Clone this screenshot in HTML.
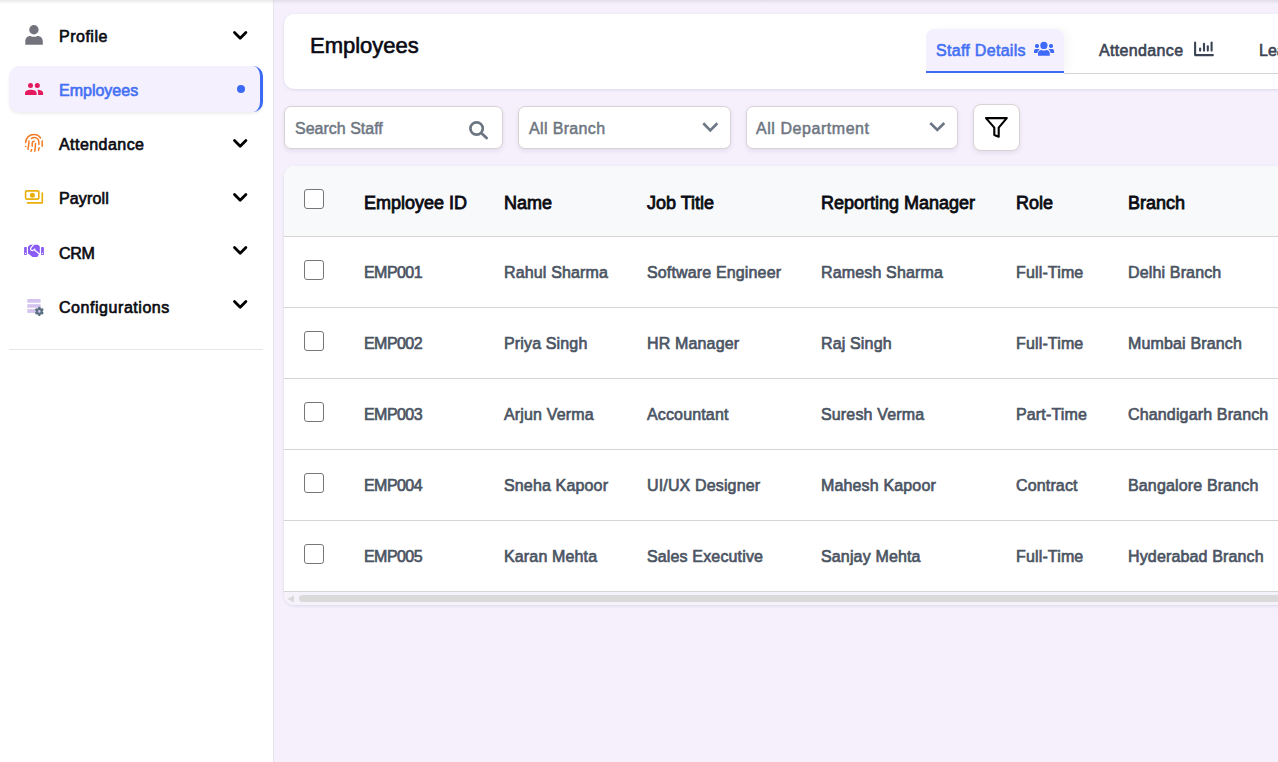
<!DOCTYPE html>
<html><head><meta charset="utf-8">
<style>
*{box-sizing:border-box;margin:0;padding:0}
html,body{width:1278px;height:762px;overflow:hidden;background:#f5f0fc;font-family:"Liberation Sans",sans-serif;}
.abs{position:absolute}
svg.abs{overflow:visible}
#topshade{position:absolute;left:0;top:0;width:1278px;height:4px;background:linear-gradient(rgba(190,190,195,.35),rgba(230,230,235,0));z-index:50}
#sidebar{position:absolute;left:0;top:0;width:274px;height:762px;background:#fff;border-right:1px solid #e4e4ea}
.lbl{position:absolute;left:59px;font-size:16px;line-height:20px;color:#0b0b12;white-space:nowrap;-webkit-text-stroke:0.65px #0b0b12}
#pill{position:absolute;left:9px;top:66px;width:254px;height:46px;background:#f5f0fd;border-radius:10px;border-right:3px solid #3d6af5;box-shadow:0 2px 3px rgba(0,0,0,.07)}
#dot{position:absolute;left:237px;top:85px;width:8px;height:8px;border-radius:50%;background:#3d6af5}
#divider{position:absolute;left:9px;top:349px;width:254px;height:1px;background:#e4e6ea}

#hcard{position:absolute;left:284px;top:14px;width:1010px;height:75px;background:#fff;border-radius:10px;box-shadow:0 1px 3px rgba(60,40,90,.12)}
#title{position:absolute;left:310px;top:32px;font-size:22px;line-height:28px;color:#0a0a14;white-space:nowrap;-webkit-text-stroke:0.6px #0a0a14}
#tab1{position:absolute;left:926px;top:29px;width:138px;height:44px;background:#f5f0fd;border-radius:8px 8px 0 0;border-bottom:2.5px solid #3d6af5;box-shadow:5px 0 8px rgba(0,0,0,.035)}
.tabt{position:absolute;font-size:16px;line-height:20px;white-space:nowrap}
#tabline{position:absolute;left:1064px;top:73px;width:220px;height:1px;background:#d6d3d6}

.inp{position:absolute;top:106px;height:43px;background:#fff;border:1px solid #d9d2d2;border-radius:7px;box-shadow:0 2px 4px rgba(80,60,120,.10)}
.ph{position:absolute;top:119px;font-size:16px;line-height:20px;color:#6e7682;white-space:nowrap;-webkit-text-stroke:0.5px #6e7682}

#tcard{position:absolute;left:284px;top:166px;width:1010px;height:439px;background:#fff;border-radius:10px;box-shadow:0 1px 3px rgba(60,40,90,.12);overflow:hidden}
#thead{position:absolute;left:0;top:0;width:100%;height:71px;background:#f8f9fb;border-bottom:1px solid #d8d4d4}
.row{position:absolute;left:0;width:100%;height:71px;border-bottom:1px solid #d8d4d4;background:#fff}
.c{position:absolute;white-space:nowrap}
#thead .c{top:25.5px;font-size:18px;line-height:22px;color:#0b0b12;-webkit-text-stroke:0.8px #0b0b12}
.row .c{top:26px;font-size:16px;line-height:20px;color:#4b5463;letter-spacing:0.15px;-webkit-text-stroke:0.65px #4b5463}
.row .c.e{letter-spacing:-0.55px}
.cb{position:absolute;left:20px;top:23px;width:20px;height:20px;border:1.5px solid #767676;border-radius:3px;background:#fff}
#sbar{position:absolute;left:0;top:426px;width:100%;height:13px;background:#f6f2fb}
#thumb{position:absolute;left:15px;top:3px;width:1200px;height:7px;border-radius:4px;background:#dadada}
</style></head><body>
<div id="topshade"></div>
<div id="sidebar"></div>
<div id="pill"></div>
<div id="dot"></div>
<div id="divider"></div>

<!-- sidebar icons -->
<svg class="abs" style="left:0;top:0" width="60" height="330" viewBox="0 0 60 330">
  <!-- profile -->
  <circle cx="33.9" cy="29.8" r="4.7" fill="#72737d"/>
  <path d="M25.3 44.8 V41.5 C25.3 38 27.3 35.9 30.3 35.9 Q33.9 37.6 37.5 35.9 C40.6 35.9 42.8 38 42.8 41.5 V44.8 Z" fill="#72737d"/>
  <!-- employees -->
  <circle cx="30.5" cy="85.5" r="2.5" fill="#e5195e"/>
  <circle cx="37.3" cy="85.5" r="2.5" fill="#e5195e"/>
  <path d="M25 95 V93 C25 90.6 28 89.8 30.8 89.8 C33.6 89.8 36.6 90.6 36.6 93 V95 Z" fill="#e5195e"/>
  <path d="M37.2 89.8 C40.2 89.8 43.1 90.8 43.1 93 V95 H38.1 V92.6 C38.1 91.5 37.9 90.5 37.2 89.8 Z" fill="#e5195e"/>
  <!-- fingerprint -->
  <g fill="none" stroke="#f57a22" stroke-width="1.5" stroke-linecap="round">
    <path d="M25.6 142.4 C26.2 137.5 29.5 134.5 34.3 134.4 C37 134.4 39.2 135.8 40.5 138"/>
    <path d="M42.2 141 V146.2"/>
    <path d="M31.4 138.5 C32.3 137.8 33.3 137.5 34.4 137.5 C37 137.5 38.9 139.6 38.9 142.2 V144.6"/>
    <path d="M25.6 146.4 L25.8 146.4"/>
    <path d="M29 141 C28.8 144 28.6 146.8 28 149.2"/>
    <path d="M34.2 141.3 C33 141.3 32.3 142 32.2 143.2 V146.3"/>
    <path d="M35.5 143.6 C35.4 146.5 35.2 149 34.8 151.2"/>
    <path d="M31.6 149.4 L31 151.3"/>
    <path d="M39.1 147.8 L38.5 150.4"/>
  </g>
  <!-- payroll -->
  <g fill="none" stroke="#e9b00c" stroke-width="1.65" stroke-linecap="round" stroke-linejoin="round">
    <rect x="25.6" y="190.8" width="13.2" height="8.3" rx="1"/>
    <path d="M27.5 202.8 H42.3 V193.1"/>
  </g>
  <circle cx="32.4" cy="195.2" r="2.5" fill="#e9b00c"/>
  <!-- crm -->
  <g fill="#8a5cf5">
    <rect x="24.1" y="247" width="2.7" height="8" rx="0.4"/>
    <rect x="41.1" y="247" width="2.8" height="8" rx="0.4"/>
    <path d="M30 244.8 H38 L39.8 246.6 V253.2 L38.8 254.6 L37.3 256.9 H32.5 L28 253.4 V246.8 Z"/>
  </g>
  <circle cx="25.5" cy="253.4" r="0.6" fill="#fff"/>
  <circle cx="42.5" cy="253.4" r="0.6" fill="#fff"/>
  <path d="M33.8 244.6 L31.2 247.4 Q29.9 249.3 31.3 250.3 Q32.7 251.1 34.1 249.7 L35.2 248.7 M34.2 249.8 L39.7 254.3" fill="none" stroke="#fff" stroke-width="1.15" stroke-linejoin="round"/>
  <!-- configurations -->
  <g fill="#d3c3ee">
    <rect x="27.3" y="299" width="13.3" height="3.7"/>
    <rect x="27.3" y="304.2" width="13.3" height="3.5"/>
    <rect x="27.3" y="309.1" width="13.3" height="3.8"/>
  </g>
  <g transform="translate(39.3 311.4)">
    <circle r="3.4" fill="#587080"/>
    <g fill="#587080">
      <rect x="-1.1" y="-4.6" width="2.2" height="9.2" rx="0.4"/>
      <rect x="-1.1" y="-4.6" width="2.2" height="9.2" rx="0.4" transform="rotate(60)"/>
      <rect x="-1.1" y="-4.6" width="2.2" height="9.2" rx="0.4" transform="rotate(120)"/>
    </g>
    <circle r="1.3" fill="#d3c3ee"/>
  </g>
</svg>

<div class="lbl" style="top:27px;letter-spacing:0.5px">Profile</div>
<div class="lbl" style="top:81px;color:#4470f4;-webkit-text-stroke-color:#4470f4">Employees</div>
<div class="lbl" style="top:135px;letter-spacing:0.45px">Attendance</div>
<div class="lbl" style="top:189px;letter-spacing:0.15px">Payroll</div>
<div class="lbl" style="top:244px;letter-spacing:-0.3px">CRM</div>
<div class="lbl" style="top:298px;letter-spacing:0.55px">Configurations</div>
<svg class="abs" style="left:230px;top:28.7px" width="20" height="14" viewBox="230 28.7 20 14"><path d="M234.5 32.2 L240.2 37.9 L245.9 32.2" fill="none" stroke="#000" stroke-width="2.8" stroke-linecap="round" stroke-linejoin="round"/></svg>
<svg class="abs" style="left:230px;top:136.7px" width="20" height="14" viewBox="230 136.7 20 14"><path d="M234.5 140.2 L240.2 145.89999999999998 L245.9 140.2" fill="none" stroke="#000" stroke-width="2.8" stroke-linecap="round" stroke-linejoin="round"/></svg>
<svg class="abs" style="left:230px;top:190.8px" width="20" height="14" viewBox="230 190.8 20 14"><path d="M234.5 194.3 L240.2 200.0 L245.9 194.3" fill="none" stroke="#000" stroke-width="2.8" stroke-linecap="round" stroke-linejoin="round"/></svg>
<svg class="abs" style="left:230px;top:244.4px" width="20" height="14" viewBox="230 244.4 20 14"><path d="M234.5 247.9 L240.2 253.6 L245.9 247.9" fill="none" stroke="#000" stroke-width="2.8" stroke-linecap="round" stroke-linejoin="round"/></svg>
<svg class="abs" style="left:230px;top:298.2px" width="20" height="14" viewBox="230 298.2 20 14"><path d="M234.5 301.7 L240.2 307.4 L245.9 301.7" fill="none" stroke="#000" stroke-width="2.8" stroke-linecap="round" stroke-linejoin="round"/></svg>

<div id="hcard"></div>
<div id="title">Employees</div>
<div id="tab1"></div>
<div id="tabline"></div>
<div class="tabt" style="left:936px;top:41px;letter-spacing:0.3px;color:#4470f4;-webkit-text-stroke:0.6px #4470f4">Staff Details</div>
<div class="tabt" style="left:1099px;top:41px;letter-spacing:0.35px;color:#3b4454;-webkit-text-stroke:0.6px #3b4454">Attendance</div>
<div class="tabt" style="left:1259px;top:41px;color:#3b4454;-webkit-text-stroke:0.6px #3b4454">Leave</div>
<svg class="abs" style="left:1028px;top:36px" width="32" height="26" viewBox="1028 36 32 26">
  <g fill="#3f6af7">
    <circle cx="1043.9" cy="45.4" r="3.6"/>
    <rect x="1035" y="43.9" width="4" height="4" rx="1.6"/>
    <rect x="1049" y="43.9" width="4" height="4" rx="1.6"/>
    <path d="M1038 55.8 V53.5 C1038 51.3 1039.6 50 1041.5 50 Q1043.9 51.2 1046.3 50 C1048.2 50 1049.8 51.3 1049.8 53.5 V55.8 Z"/>
    <path d="M1034 52.9 V51 C1034 49.9 1034.8 49.1 1035.8 49.1 H1039.8 C1038.6 50 1037.7 51.3 1037.4 52.9 Z"/>
    <path d="M1054.1 52.9 V51 C1054.1 49.9 1053.3 49.1 1052.3 49.1 H1048.3 C1049.5 50 1050.4 51.3 1050.7 52.9 Z"/>
  </g>
</svg>
<svg class="abs" style="left:1188px;top:36px" width="32" height="26" viewBox="1188 36 32 26">
  <g fill="none" stroke="#3b4454" stroke-width="2.1" stroke-linecap="round" stroke-linejoin="round">
    <path d="M1195.1 42.5 V55.1 H1212.9"/>
    <path d="M1200.1 48.6 V50.6"/>
    <path d="M1204 43.8 V50.6"/>
    <path d="M1207.8 46.2 V50.6"/>
    <path d="M1211.6 42.5 V50.6"/>
  </g>
</svg>

<div class="inp" style="left:284px;width:219px"></div>
<div class="inp" style="left:518px;width:213px"></div>
<div class="inp" style="left:746px;width:212px"></div>
<div class="inp" style="left:973px;top:104px;width:47px;height:47px;border-radius:8px"></div>
<div class="ph" style="left:295px">Search Staff</div>
<div class="ph" style="left:529px;letter-spacing:0.35px">All Branch</div>
<div class="ph" style="left:756px;letter-spacing:0.55px">All Department</div>
<svg class="abs" style="left:462px;top:112px" width="34" height="34" viewBox="462 112 34 34">
  <circle cx="476.6" cy="128.5" r="6.2" fill="none" stroke="#6b7582" stroke-width="2.7"/>
  <path d="M482.3 134 L486.6 138" stroke="#6b7582" stroke-width="2.8" stroke-linecap="round"/>
</svg>
<svg class="abs" style="left:698px;top:116px" width="26" height="22" viewBox="698 116 26 22">
  <path d="M704.2 124.2 L710.3 130.3 L716.4 124.2" fill="none" stroke="#6b7785" stroke-width="2.6" stroke-linecap="square"/>
</svg>
<svg class="abs" style="left:925px;top:116px" width="26" height="22" viewBox="925 116 26 22">
  <path d="M931.2 123.9 L937.3 130 L943.4 123.9" fill="none" stroke="#6b7785" stroke-width="2.6" stroke-linecap="square"/>
</svg>
<svg class="abs" style="left:978px;top:110px" width="36" height="34" viewBox="978 110 36 34">
  <path d="M986 118.1 H1006.8 L998.7 127.6 V136.8 L994.3 135 V127.6 Z" fill="none" stroke="#000" stroke-width="2.1" stroke-linejoin="round"/>
</svg>

<div id="tcard">
<div id="thead"><div class="cb"></div><div class="c" style="left:80px">Employee ID</div><div class="c" style="left:220px">Name</div><div class="c" style="left:363px">Job Title</div><div class="c" style="left:537px">Reporting Manager</div><div class="c" style="left:732px">Role</div><div class="c" style="left:844px">Branch</div></div>

<div class="row" style="top:71px"><div class="cb"></div><div class="c e" style="left:80px">EMP001</div><div class="c" style="left:220px">Rahul Sharma</div><div class="c" style="left:363px">Software Engineer</div><div class="c" style="left:537px">Ramesh Sharma</div><div class="c" style="left:732px">Full-Time</div><div class="c" style="left:844px">Delhi Branch</div></div>
<div class="row" style="top:142px"><div class="cb"></div><div class="c e" style="left:80px">EMP002</div><div class="c" style="left:220px">Priya Singh</div><div class="c" style="left:363px">HR Manager</div><div class="c" style="left:537px">Raj Singh</div><div class="c" style="left:732px">Full-Time</div><div class="c" style="left:844px">Mumbai Branch</div></div>
<div class="row" style="top:213px"><div class="cb"></div><div class="c e" style="left:80px">EMP003</div><div class="c" style="left:220px">Arjun Verma</div><div class="c" style="left:363px">Accountant</div><div class="c" style="left:537px">Suresh Verma</div><div class="c" style="left:732px">Part-Time</div><div class="c" style="left:844px">Chandigarh Branch</div></div>
<div class="row" style="top:284px"><div class="cb"></div><div class="c e" style="left:80px">EMP004</div><div class="c" style="left:220px">Sneha Kapoor</div><div class="c" style="left:363px">UI/UX Designer</div><div class="c" style="left:537px">Mahesh Kapoor</div><div class="c" style="left:732px">Contract</div><div class="c" style="left:844px">Bangalore Branch</div></div>
<div class="row" style="top:355px"><div class="cb"></div><div class="c e" style="left:80px">EMP005</div><div class="c" style="left:220px">Karan Mehta</div><div class="c" style="left:363px">Sales Executive</div><div class="c" style="left:537px">Sanjay Mehta</div><div class="c" style="left:732px">Full-Time</div><div class="c" style="left:844px">Hyderabad Branch</div></div>

  <div id="sbar"><svg class="abs" style="left:3px;top:3px" width="8" height="8" viewBox="0 0 8 8"><path d="M0.5 4 L7 0.5 V7.5 Z" fill="#d9d9d9"/></svg><div id="thumb"></div></div>
</div>
</body></html>
